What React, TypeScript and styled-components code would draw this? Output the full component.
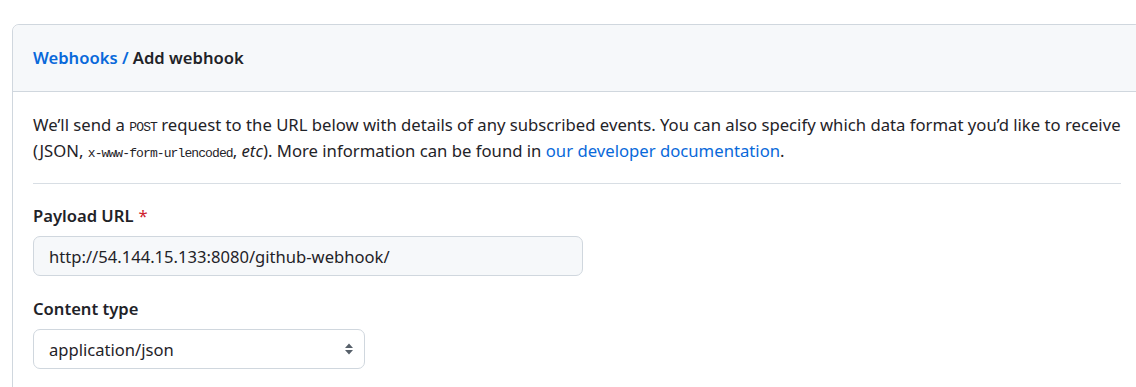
import styled, { createGlobalStyle } from "styled-components";

const GlobalStyle = createGlobalStyle`
  html, body {
    margin: 0;
    padding: 0;
    background: #ffffff;
    overflow: hidden;
  }
  body {
    font-family: "Noto Sans", "Liberation Sans", sans-serif;
    font-size: 16.7px;
    line-height: 26px;
    color: #1f2328;
  }
`;

const Page = styled.div`
  padding: 24px 0 0 12px;
`;

const Box = styled.div`
  width: 1130px;
  min-height: 400px;
  border: 1px solid #d0d7de;
  border-radius: 7px;
  box-sizing: border-box;
`;

const BoxHeader = styled.div`
  background: #f6f8fa;
  border-bottom: 1px solid #d0d7de;
  border-radius: 7px 7px 0 0;
  padding: 20px;
`;

const Title = styled.h3`
  margin: 0;
  font-size: 16.6px;
  line-height: 26px;
  font-weight: 600;
  color: #1f2328;
`;

const Link = styled.a`
  color: #0969da;
  text-decoration: none;
`;

const BoxBody = styled.div`
  padding: 20px;
`;

const Intro = styled.p`
  margin: 0;
`;

const Code = styled.code`
  font-family: "Liberation Mono", "DejaVu Sans Mono", monospace;
  font-size: 13px;
  letter-spacing: -0.9px;
  line-height: 1;
`;

const Divider = styled.hr`
  height: 0;
  margin: 19px 0 19px;
  border: 0;
  border-bottom: 1px solid #d8dee4;
`;

const Field = styled.div`
  display: flex;
  flex-direction: column;
  gap: 7px;
  margin-bottom: 20px;
`;

const Label = styled.label`
  font-size: 16.6px;
  font-weight: 600;
  line-height: 26px;
`;

const Required = styled.span`
  color: #cf222e;
  font-weight: 400;
  margin-left: 5px;
`;

const Input = styled.input<{ $width: number }>`
  width: ${(p) => p.$width}px;
  height: 40px;
  box-sizing: border-box;
  padding: 0 15px;
  font-family: inherit;
  font-size: 16.6px;
  color: #1f2328;
  background: #f6f8fa;
  border: 1px solid #d0d7de;
  border-radius: 7px;
  outline: none;
`;

const SelectWrap = styled.div<{ $width: number }>`
  position: relative;
  width: ${(p) => p.$width}px;
`;

const Select = styled.select`
  appearance: none;
  width: 100%;
  height: 40px;
  box-sizing: border-box;
  padding: 0 36px 0 15px;
  font-family: inherit;
  font-size: 16.6px;
  color: #1f2328;
  background: #ffffff;
  border: 1px solid #d0d7de;
  border-radius: 7px;
  outline: none;
`;

const Caret = styled.svg`
  position: absolute;
  right: 10px;
  top: 50%;
  transform: translateY(-50%);
  pointer-events: none;
`;

export default function App() {
  return (
    <>
      <GlobalStyle />
      <Page>
        <Box>
          <BoxHeader>
            <Title>
              <Link href="#">Webhooks /</Link> Add webhook
            </Title>
          </BoxHeader>
          <BoxBody>
            <Intro>
              We’ll send a <Code>POST</Code> request to the URL below with details of any
              subscribed events. You can also specify which data format you’d like to receive
              (JSON, <Code>x-www-form-urlencoded</Code>, <em>etc</em>). More information can be
              found in <Link href="#">our developer documentation</Link>.
            </Intro>
            <Divider />
            <Field>
              <Label>
                Payload URL<Required>*</Required>
              </Label>
              <Input
                $width={550}
                defaultValue="http://54.144.15.133:8080/github-webhook/"
              />
            </Field>
            <Field>
              <Label>Content type</Label>
              <SelectWrap $width={332}>
                <Select defaultValue="json">
                  <option value="json">application/json</option>
                  <option value="form">application/x-www-form-urlencoded</option>
                </Select>
                <Caret width="12" height="16" viewBox="0 0 12 16">
                  <path d="M6 2.5 L10 7 L2 7 Z M2 9 L10 9 L6 13.5 Z" fill="#57606a" />
                </Caret>
              </SelectWrap>
            </Field>
          </BoxBody>
        </Box>
      </Page>
    </>
  );
}
